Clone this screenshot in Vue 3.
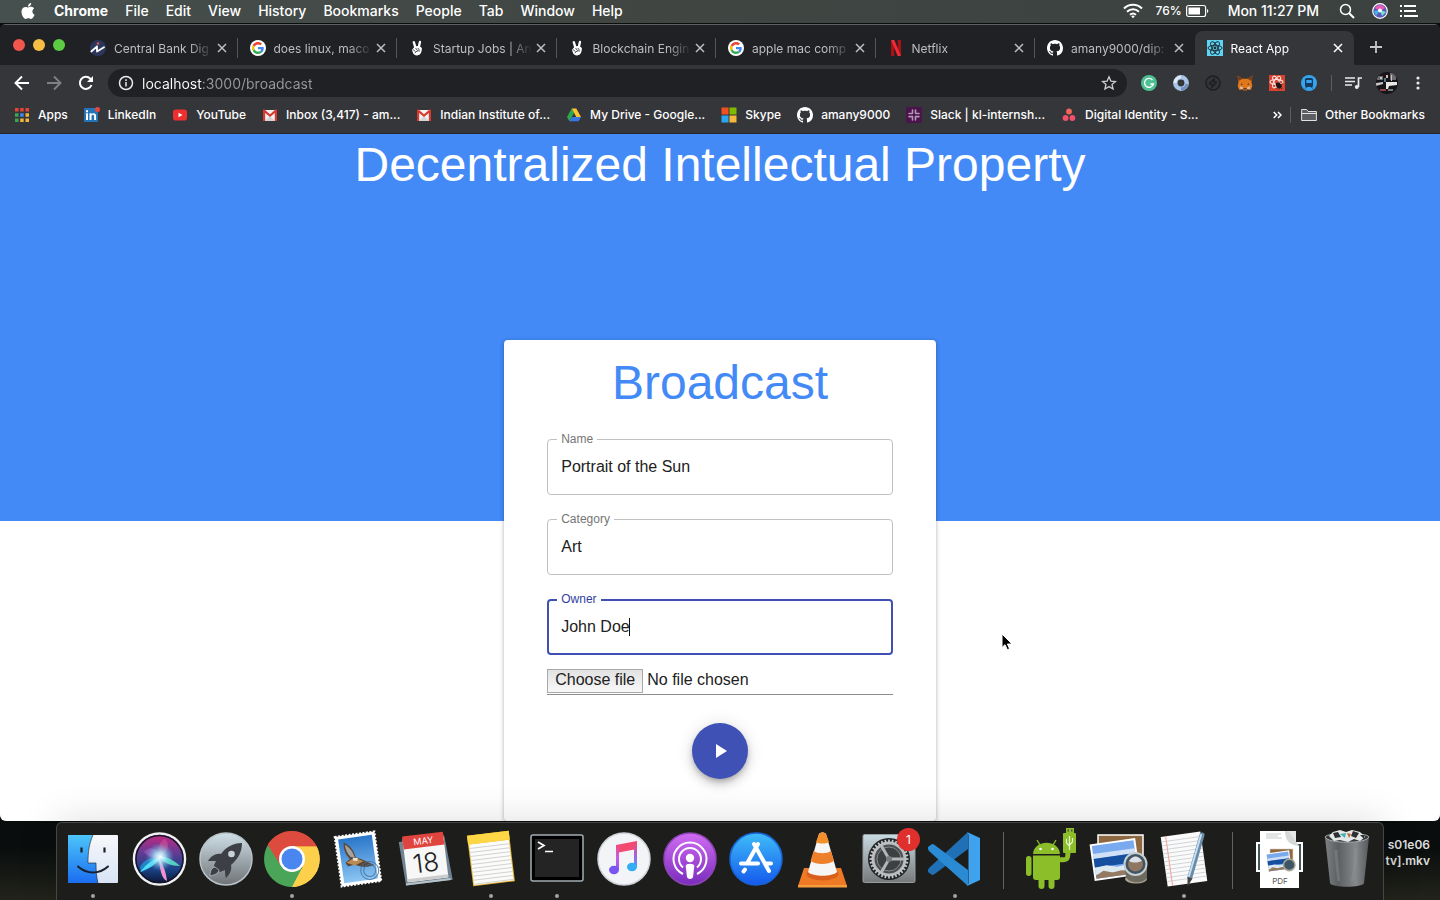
<script setup>
import { ref } from 'vue'

const menus = ['File', 'Edit', 'View', 'History', 'Bookmarks', 'People', 'Tab', 'Window', 'Help']

const google = '<circle cx="24" cy="24" r="24" fill="#fff"/><g transform="translate(6 6) scale(.75)"><path fill="#EA4335" d="M24 9.5c3.54 0 6.71 1.22 9.21 3.6l6.85-6.85C35.9 2.38 30.47 0 24 0 14.62 0 6.51 5.38 2.56 13.22l7.98 6.19C12.43 13.72 17.74 9.5 24 9.5z"/><path fill="#4285F4" d="M46.98 24.55c0-1.57-.15-3.09-.38-4.55H24v9.02h12.94c-.58 2.96-2.26 5.48-4.78 7.18l7.73 6c4.51-4.18 7.09-10.36 7.09-17.65z"/><path fill="#FBBC05" d="M10.53 28.59c-.48-1.45-.76-2.99-.76-4.59s.27-3.14.76-4.59l-7.98-6.19C.92 16.46 0 20.12 0 24c0 3.88.92 7.54 2.56 10.78l7.97-6.19z"/><path fill="#34A853" d="M24 48c6.48 0 11.93-2.13 15.89-5.81l-7.73-6c-2.15 1.45-4.92 2.3-8.16 2.3-6.26 0-11.57-4.22-13.47-9.91l-7.98 6.19C6.51 42.62 14.62 48 24 48z"/></g>'
const github = '<path fill="#fff" d="M8 0C3.58 0 0 3.58 0 8c0 3.54 2.29 6.53 5.47 7.59.4.07.55-.17.55-.38 0-.19-.01-.82-.01-1.49-2.01.37-2.53-.49-2.69-.94-.09-.23-.48-.94-.82-1.13-.28-.15-.68-.52-.01-.53.63-.01 1.08.58 1.23.82.72 1.21 1.87.87 2.33.66.07-.52.28-.87.51-1.07-1.78-.2-3.64-.89-3.64-3.95 0-.87.31-1.59.82-2.15-.08-.2-.36-1.02.08-2.12 0 0 .67-.21 2.2.82.64-.18 1.32-.27 2-.27s1.36.09 2 .27c1.53-1.04 2.2-.82 2.2-.82.44 1.1.16 1.92.08 2.12.51.56.82 1.27.82 2.15 0 3.07-1.87 3.75-3.65 3.95.29.25.54.73.54 1.48 0 1.07-.01 1.93-.01 2.2 0 .21.15.46.55.38A8.01 8.01 0 0 0 16 8c0-4.42-3.58-8-8-8z"/>'
const gmail = '<path fill="#f2f2f2" d="M1 3h14v11H1z"/><path fill="#d5d5d5" d="M3 14l5-5 5 5z"/><path fill="#d93a2f" d="M1 2.5h1.5L8 7.2l5.500-4.700H15V14h-2.200V6L8 10 3.200 6v8H1z"/>'
const hand = '<path fill="#fff" d="M4.300 1.200c.8-.3 1.400.1 1.700.8L7.300 6.300 8.800 6l1-4.300c.2-.8.9-1.100 1.500-.9.7.2.9.8.8 1.500l-1 4.500c1.300.3 1.900 1.200 1.800 2.500l-.6 2.800c-.5 2-1.900 3.300-4.300 3.300-2.200 0-3.700-1.200-4.100-2.900-.3-1.300-1.200-2.200-.5-3.300l1.700-2L3.700 2.700c-.2-.7 0-1.300.6-1.500z"/><path fill="none" stroke="#202124" stroke-width=".8" d="M4 9.500l2.500 2M6.500 8l2 2.500M8.800 8l1.500 2M6 13c1-2 3-2.500 5-2"/>'

const icons = {
  bank: { box: '0 0 16 16', art: '<circle cx="8" cy="8" r="8" fill="#2b365c"/><path d="M1.300 11.500L7 6.300v5.200l7-4.200" fill="none" stroke="#fff" stroke-width="1.800" stroke-linejoin="round" stroke-linecap="round"/><circle cx="8" cy="3.500" r="1.200" fill="#e8594a"/>' },
  google: { box: '0 0 48 48', art: google },
  github: { box: '0 0 16 16', art: github },
  hand: { box: '0 0 16 16', art: hand },
  netflix: { box: '0 0 16 16', art: '<path fill="#a80f17" d="M3 0h3.300v16H3zM9.700 0H13v16H9.700z"/><path fill="#ef2b33" d="M3 0h3.300L13 16H9.700z"/>' },
  react: { box: '0 0 16 16', art: '<path fill="#5ed4f3" d="M0 0h16v16H0z"/><g fill="none" stroke="#20303a" stroke-width="1"><ellipse cx="8" cy="8" rx="7" ry="2.700"/><ellipse cx="8" cy="8" rx="7" ry="2.700" transform="rotate(60 8 8)"/><ellipse cx="8" cy="8" rx="7" ry="2.700" transform="rotate(120 8 8)"/></g><circle cx="8" cy="8" r="1.400" fill="#20303a"/>' },
  apps: { box: '0 0 16 16', art: '<g><path fill="#ea4335" d="M1 1h3.500v3.500H1zM6.200 1h3.500v3.500H6.200zM11.500 1H15v3.500h-3.500z"/><path fill="#34a853" d="M1 6.200h3.500v3.500H1z"/><path fill="#4285f4" d="M6.200 6.200h3.500v3.500H6.200z"/><path fill="#f5b43a" d="M11.500 6.200H15v3.500h-3.500zM6.200 11.500h3.500V15H6.200zM11.500 11.500H15V15h-3.500z"/><path fill="#34a853" d="M1 11.500h3.500V15H1z"/></g>' },
  linkedin: { box: '0 0 16 16', art: '<path fill="#2474b5" d="M0 1h14v14H0z"/><path fill="#fff" d="M2 6.200h2V13H2zM2 3.300h2v2H2zM5.500 6.200h2v1c1-1.600 4.600-1.600 4.600 1.600V13h-2V9.300c0-2-2.600-2-2.600 0V13h-2z"/><circle cx="13.500" cy="2.500" r="2.500" fill="#e8453c"/>' },
  youtube: { box: '0 0 16 16', art: '<rect x="1" y="2.500" width="14" height="11" rx="2.800" fill="#ee2f2f"/><path fill="#fff" d="M6.500 5.700v4.600L10.500 8z"/>' },
  gmail: { box: '0 0 16 16', art: gmail },
  drive: { box: '0 0 16 16', art: '<path fill="#2da94f" d="M5.700 1.500L1 10l2.400 4.200L8 6z"/><path fill="#fdc52e" d="M5.700 1.500h4.600L15 10h-4.700z"/><path fill="#3777e3" d="M5.700 10H15l-2.400 4.200H3.400z"/>' },
  skype: { box: '0 0 16 16', art: '<path fill="#f25022" d="M.5.500h7v7h-7z"/><path fill="#7fba00" d="M8.500.500h7v7h-7z"/><path fill="#2aa6ef" d="M.5 8.500h7v7h-7z"/><path fill="#f8b83d" d="M8.500 8.500h7v7h-7z"/>' },
  slack: { box: '0 0 16 16', art: '<path fill="#4a154b" d="M0 0h16v16H0z"/><g stroke="#b795b7" stroke-width="1.600" stroke-linecap="round"><path d="M6.500 3v3M3 6.500h3.300M9.500 3v3.300M9.700 6.500h3.300M9.500 9.600V13M9.700 9.600H13M6.500 9.600V13M3 9.600h3.300"/></g>' },
  asana: { box: '0 0 16 16', art: '<circle cx="8" cy="4.500" r="2.900" fill="#f2665a"/><circle cx="4.600" cy="11" r="2.900" fill="#f0516b"/><circle cx="11.400" cy="11" r="2.900" fill="#f0516b"/>' },
  folder: { box: '0 0 16 16', art: '<path fill="#5c5e61" stroke="#dfe1e5" d="M.6 13.500V2.500h5l1.500 2h8.300v9zM.6 6.500h14.800"/>' },
  grammarly: { box: '0 0 16 16', art: '<circle cx="8" cy="8" r="8" fill="#4dc192"/><path fill="none" stroke="#fff" stroke-width="1.400" d="M11.500 5A4.500 4.500 0 1 0 12.400 9H9.300"/>' },
  ring: { box: '0 0 16 16', art: '<circle cx="8" cy="8" r="5.700" fill="none" stroke="#a9c4e6" stroke-width="4.500"/><path d="M2 8a6 6 0 0 1 6-6" fill="none" stroke="#dfe9f5" stroke-width="3"/><path d="M14 9a6 6 0 0 1-6 5" fill="none" stroke="#7390bd" stroke-width="3"/>' },
  compass: { box: '0 0 16 16', art: '<circle cx="8" cy="8" r="7" fill="#333538" stroke="#1d1e20" stroke-width="1.500"/><path d="M4 9l5-5v3h3M12 7l-5 5V9H4" fill="none" stroke="#1d1e20" stroke-width="1.500"/>' },
  fox: { box: '0 0 16 16', art: '<path fill="#e2761b" d="M.5.5l5 3.300h5l5-3.300-1 6.500.8 4-1.500 4-3.300-.8-1.200 1.300h-2.600l-1.200-1.300-3.300.8L.7 11l.8-4z"/><path fill="#763d16" d="M.5.5l5 3.300L1.500 6zM15.500.5l-5 3.300L14.500 6zM6 13h4l-.7 1.800H6.700z"/><path fill="#d7c1b3" d="M2.500 11.500l3 .5.700 2-2.500.2zM13.500 11.500l-3 .5-.7 2 2.500.2z"/><path fill="#233447" d="M4 8.200l2 1.200-2 .3zM12 8.200l-2 1.200 2 .3z"/>' },
  bug: { box: '0 0 16 16', art: '<path fill="#d8432f" d="M0 0h16v16H0z"/><g fill="none" stroke="#fbe3df" stroke-width="1.100"><ellipse cx="7.500" cy="7" rx="6.500" ry="2.500"/><ellipse cx="7.500" cy="7" rx="6.500" ry="2.500" transform="rotate(60 7.500 7)"/><ellipse cx="7.500" cy="7" rx="6.500" ry="2.500" transform="rotate(120 7.500 7)"/></g><ellipse cx="9.800" cy="10.500" rx="2.500" ry="3.300" transform="rotate(-45 9.800 10.500)" fill="#1f1513"/><path stroke="#1f1513" stroke-width=".8" d="M7 8l6 6M13.500 8.500l-6 5M10 6.500v8"/>' },
  train: { box: '0 0 16 16', art: '<circle cx="8" cy="8" r="8" fill="#35a4ee"/><rect x="4" y="3" width="8" height="9" rx="1.500" fill="#173a5c"/><path fill="#35a4ee" d="M5.300 5h5.400v3H5.300z"/><path stroke="#173a5c" d="M5.500 12l-1 1.500M10.500 12l1 1.500"/>' },
}

const tabs = [
  { icon: 'bank', title: 'Central Bank Dig' },
  { icon: 'google', title: 'does linux, maco' },
  { icon: 'hand', title: 'Startup Jobs | An' },
  { icon: 'hand', title: 'Blockchain Engin' },
  { icon: 'google', title: 'apple mac comp' },
  { icon: 'netflix', title: 'Netflix' },
  { icon: 'github', title: 'amany9000/dip:' },
  { icon: 'react', title: 'React App', active: true },
]

const bookmarks = [
  { icon: 'apps', title: 'Apps' },
  { icon: 'linkedin', title: 'LinkedIn' },
  { icon: 'youtube', title: 'YouTube' },
  { icon: 'gmail', title: 'Inbox (3,417) - am...' },
  { icon: 'gmail', title: 'Indian Institute of...' },
  { icon: 'drive', title: 'My Drive - Google...' },
  { icon: 'skype', title: 'Skype' },
  { icon: 'github', title: 'amany9000' },
  { icon: 'slack', title: 'Slack | kl-internsh...' },
  { icon: 'asana', title: 'Digital Identity - S...' },
]

const extensions = ['grammarly', 'ring', 'compass', 'fox', 'bug', 'train']

const gearTeeth = Array.from({ length: 32 }, (_, i) => `<path d="M33 17.500v3" transform="rotate(${i * 11.25} 33 37)"/>`).join('')
const paperLines = (x, y, w, n, step) => Array.from({ length: n }, (_, i) => `<path d="M${x} ${y + i * step}h${w}"/>`).join('')

const dockMain = [
  { name: 'Finder', running: true, art: '<defs><linearGradient id="fa" x2="0" y2="1"><stop stop-color="#4cc5f9"/><stop offset="1" stop-color="#1b6df0"/></linearGradient><linearGradient id="fb" x2="0" y2="1"><stop stop-color="#f7f8fa"/><stop offset="1" stop-color="#d7e4f5"/></linearGradient></defs><rect x="8" y="13" width="50" height="48" rx="1" fill="url(#fb)"/><path fill="url(#fa)" d="M8 13h25c-4 9-5 17-5 28h8c0 7 .5 14 2 20H8z"/><path fill="none" stroke="#18202a" stroke-width=".6" d="M33 13c-4 9-5 17-5 28h8c0 7 .5 14 2 20"/><path stroke="#18202a" stroke-width="2.200" d="M21.500 25.500v5M44.500 25.500v5"/><path fill="none" stroke="#18202a" stroke-width="2" stroke-linecap="round" d="M18 44.500c9 8 21 8 30 0"/>' },
  { name: 'Siri', art: '<defs><linearGradient id="sa" x2="0" y2="1"><stop stop-color="#c9267c"/><stop offset=".35" stop-color="#6b3a94"/><stop offset=".7" stop-color="#1a4387"/><stop offset="1" stop-color="#0d1230"/></linearGradient><radialGradient id="sb"><stop stop-color="#fff"/><stop offset=".35" stop-color="#b8f4ff" stop-opacity=".8"/><stop offset="1" stop-color="#4fc3ef" stop-opacity="0"/></radialGradient></defs><circle cx="33.500" cy="37" r="25.500" fill="url(#sa)" stroke="#f1f1f3" stroke-width="2.500"/><circle cx="33.500" cy="37" r="23.500" fill="none" stroke="#15172c" stroke-width="1.500"/><path d="M14 45c4-8 12-10 20-9-5 6-11 12-19 14z" fill="#1f9fe0" opacity=".7"/><path d="M14 50c7-8 12-13 20-14-4 7-11 10-20 14z" fill="#4fe0f5"/><path d="M34 34c8 1 15 5 20 10-9 0-17-3-20-10z" fill="#55e0c4" opacity=".9"/><path d="M33 36c4 6 7 14 8 23-5-1-8-14-8-23z" fill="#f590cf"/><path d="M18 30c6-7 13-4 16 6-8 0-13-2-16-6z" fill="#a86bc9" opacity=".5"/><path d="M34 35c-3-8-1-15 5-18 5 5 4 13-5 18z" fill="#e0559d" opacity=".5"/><circle cx="34" cy="35" r="14" fill="url(#sb)"/>' },
  { name: 'Launchpad', art: '<defs><linearGradient id="la" x2="0" y2="1"><stop stop-color="#cfe0e8"/><stop offset="1" stop-color="#6f7376"/></linearGradient></defs><circle cx="33" cy="37" r="26" fill="url(#la)" stroke="#b9c3c9" stroke-width="1.500"/><path fill="#3c4044" d="M49 21c-9 0-16 4-21 11-5-1-10 2-13 7l8 0c-1 2-2 4-2 5l6 6 5-2c0 3 0 5 1 8 4-4 6-8 5-13 7-6 11-13 11-22z"/><circle cx="38.500" cy="32" r="3.300" fill="#c8d2d8"/><path fill="#3c4044" stroke="#d0d6da" stroke-width=".6" d="M22 45c-4 1-5 5-5 9 4-1 8-2 9-6z"/>' },
  { name: 'Chrome', running: true, art: '<path fill="#dd4b3e" d="M33 37L8.800 22.500A28 28 0 0 1 57.500 24z"/><path fill="#4aa559" d="M33 37L8.800 23A28 28 0 0 0 33 65l10-17z"/><path fill="#fdd04b" d="M33 37V24.500h24.700A28 28 0 0 1 33 65l11-20z"/><path fill="#4aa559" d="M8.800 23L33 65l10-20-21-1z"/><path fill="#dd4b3e" d="M8.800 23A28 28 0 0 1 57.700 24.500H33L22 44z"/><path fill="#fdd04b" d="M44 44L33 65a28 28 0 0 0 24.700-40.500H33z"/><circle cx="33" cy="37" r="13" fill="#fff"/><circle cx="33" cy="37" r="10.500" fill="#4a86ef"/>' },
  { name: 'Mail', art: '<g transform="rotate(-8 33 37)"><rect x="13" y="12" width="40" height="50" fill="#fff" stroke="#fff" stroke-width="2" stroke-dasharray="2 1.500"/><defs><linearGradient id="ma" x2="0" y2="1"><stop stop-color="#2a76ca"/><stop offset="1" stop-color="#8cc6f2"/></linearGradient></defs><rect x="16" y="15" width="34" height="44" fill="url(#ma)"/><path fill="#594738" d="M21 19c6 3 9 9 10 16 7 3 12 7 17 10-6 2-13 1-19-3l-7 1-2-4 5-3c-4-5-5-11-4-17z"/><path fill="#a9a49b" d="M22 21c4 3 7 8 8 14l-4-1c-3-4-4-8-4-13z"/><path fill="#b98a52" d="M21 39l9-4 8 5-9 3z"/><path fill="#e9e2d5" d="M28 35l5 1-1 3-4-1z"/><g fill="none" stroke="#456e9b" opacity=".8"><circle cx="43" cy="50" r="9"/><circle cx="43" cy="50" r="6"/></g></g>' },
  { name: 'Calendar', art: '<g transform="rotate(-7 33 37)"><path fill="#718391" d="M9 17h46l3 44H11z"/><path fill="#b7c3cb" d="M11 59h45v2H11z"/><rect x="13" y="14" width="41" height="44" rx="1" fill="#f7f7f7"/><path fill="#e0443f" d="M13 12h41v13H13z"/><path fill="#ccc" d="M13 55h41v3H13z"/><text x="33.500" y="22" fill="#fff" font-family="Inter,sans-serif" font-size="9" text-anchor="middle">MAY</text><text x="33.500" y="50" fill="#222" font-family="Inter,sans-serif" font-size="26" font-weight="300" text-anchor="middle">18</text></g>' },
  { name: 'Notes', running: true, art: `<g transform="rotate(-7 33 37)"><path fill="#e6b52e" d="M12 11h42v51H12z"/><path fill="#fbfbf9" d="M13 20h40v41H13z"/><path fill="#fcd645" d="M12 11h42v9H12z"/><g stroke="#d2d2d0">${paperLines(13, 24, 40, 10, 4)}</g></g>` },
  { name: 'Terminal', running: true, art: '<rect x="7" y="13" width="52" height="46" rx="2" fill="#000" stroke="#a2adb3" stroke-width="1.500"/><path fill="#242424" d="M11 17h44v38H11z"/><path fill="none" stroke="#fff" stroke-width="1.700" d="M14 20l6 3.500-6 3.500M21 29.500h8"/>' },
  { name: 'Music', art: '<defs><linearGradient id="mu" x1="0" y1="20" x2="0" y2="52" gradientUnits="userSpaceOnUse"><stop stop-color="#f4486f"/><stop offset=".5" stop-color="#c95ce0"/><stop offset="1" stop-color="#7a55f2"/></linearGradient><linearGradient id="mv" x1="0" y1="20" x2="0" y2="50" gradientUnits="userSpaceOnUse"><stop stop-color="#f5486e"/><stop offset=".5" stop-color="#9a66e8"/><stop offset="1" stop-color="#33aef5"/></linearGradient></defs><circle cx="33" cy="37" r="26" fill="#f3f4f7" stroke="#cfd2d8" stroke-width="1.500"/><path fill="#f24a70" d="M25 23l21-4v8l-21 4z"/><path d="M25 23h3v25h-3z" fill="url(#mu)"/><path d="M43 20h3v25h-3z" fill="url(#mv)"/><ellipse cx="23" cy="48" rx="5" ry="4.200" fill="#7a55f2"/><ellipse cx="41" cy="45" rx="5" ry="4.200" fill="#33aef5"/>' },
  { name: 'Podcasts', art: '<defs><linearGradient id="po" x2="0" y2="1"><stop stop-color="#d16cf4"/><stop offset="1" stop-color="#7a2cbd"/></linearGradient></defs><circle cx="33" cy="37" r="26" fill="url(#po)" stroke="#8d45b4" stroke-width="1.500"/><g fill="none" stroke="#fff" stroke-width="2"><path d="M26 52a16.500 16.500 0 1 1 14 0"/><path d="M26 45.500a11 11 0 1 1 14 0"/></g><circle cx="33" cy="36" r="4.200" fill="#fff"/><path fill="#fff" d="M28.700 44c0-3 8.600-3 8.600 0l-1.300 11c-.5 2.500-5.500 2.500-6 0z"/>' },
  { name: 'App Store', art: '<defs><linearGradient id="as" x2="0" y2="1"><stop stop-color="#3fbdf8"/><stop offset="1" stop-color="#1559ed"/></linearGradient></defs><circle cx="33" cy="37" r="26" fill="url(#as)" stroke="#1764d8" stroke-width="1.500"/><g stroke="#fff" stroke-width="4" stroke-linecap="round"><path d="M35 22L24 41.500M31 22l15 27M18 41.500h17M43 41.500h5M22 47.500l-1.500 2"/></g>' },
  { name: 'VLC', art: '<path fill="#ee7a26" d="M14 46h37l6 18H8z"/><path fill="#f79b3c" d="M8 63h49v2.500H8z"/><ellipse cx="32.500" cy="52" rx="16" ry="6.500" fill="#d8601b"/><path fill="#f6f6f6" d="M29 12c1-2 6-2 7 0l11 38c-5 5-24 5-29 0z"/><path fill="#f4902b" d="M29 12c1-2 6-2 7 0l3 8c-3 2-10 2-13 0z"/><path fill="#ee7f2b" d="M23.500 29c5 3 13 3 17.500 0l3 10c-6 4-18 4-23.500 0z"/>' },
  { name: 'System Preferences', badge: '1', art: `<defs><linearGradient id="sp" x2="0" y2="1"><stop stop-color="#c8dae2"/><stop offset="1" stop-color="#77797b"/></linearGradient></defs><rect x="7" y="12.500" width="52" height="48" rx="1.500" fill="url(#sp)" stroke="#969b9e"/><circle cx="33" cy="37" r="21" fill="#222527"/><circle cx="33" cy="37" r="16" fill="#4c4f51" stroke="#b9bdbf" stroke-width="3"/><g stroke="#c7cacb" stroke-width="1.700">${gearTeeth}</g><circle cx="33" cy="37" r="12" fill="#3d4042" stroke="#85898b"/><path stroke="#b2b6b8" stroke-width="3" d="M33 37h15M33 37L25.500 24M33 37l-7.500 13"/><circle cx="33" cy="37" r="3" fill="#787c7e"/>` },
  { name: 'Visual Studio Code', running: true, art: '<path fill="#1f70b4" d="M46 10L7 46l-1 2v2l4 3 2-.5L46 27z"/><path fill="#2a8ad4" d="M6 27v-2l4-3 2 .500L46 48v16L7 29z"/><path fill="#3ea2ee" d="M45 10l13 6v42l-13 6c1-1 1.500-2 1.500-3V13c0-1-.5-2-1.500-3z"/>' },
]

const picture = '<path fill="#8d6840" d="M13 13h45v32H13z" stroke="#fff" stroke-width="1.500"/><g transform="rotate(-8 30 38)"><path fill="#fff" d="M7 19h46v37H7z"/><path fill="#79a9ee" d="M9 21h42v33H9z"/><path fill="#cfe0f7" d="M9 29h42v5H9z"/><path fill="#164f9f" d="M9 34h42v9H9z"/><path fill="#dce9f1" d="M9 43l12-1 10 3 20-2v7H9z"/><path fill="#957a61" d="M9 51l8-4 9 3 9-1 16 3v2H9z"/></g>'

const dockTools = [
  { name: 'Android File Transfer', art: '<g transform="translate(-2 -1)"><g fill="#8cbe2a"><path d="M16 33c1-15 26-15 27 0z"/><path d="M16 34.500h27V56c0 2-1 3-3 3H19c-2 0-3-1-3-3z"/><rect x="9" y="35" width="5.500" height="20" rx="2.700"/><rect x="21.500" y="54" width="6" height="14" rx="3"/><rect x="31.500" y="54" width="6" height="14" rx="3"/></g><path fill="none" stroke="#8cbe2a" stroke-width="5" d="M43 38.500c8 1 8-1 8-9"/><path stroke="#8cbe2a" stroke-width="1.300" d="M23 24l-3-5M36 24l3-5"/><rect x="46" y="12" width="13" height="20" rx="1" fill="#8cbe2a"/><path fill="#8cbe2a" d="M49 7h8v5h-8z"/><path stroke="#e8f4d0" stroke-width="1.200" fill="none" d="M52.500 15v14M49.500 18v4l3 3M55.500 17v4l-3 3"/><circle cx="23.500" cy="28" r="1.300" fill="#fff"/><circle cx="35.500" cy="28" r="1.300" fill="#fff"/><path fill="#4c4d47" d="M50.500 8.500h1.500v2h-1.500zM54 8.500h1.500v2H54z"/></g>' },
  { name: 'Preview', art: picture + '<ellipse cx="51" cy="57" rx="11" ry="4.500" fill="#aaa38f"/><path fill="#6d6a60" d="M39 40h23v15c-2 7-18 7-21 0z"/><circle cx="50.500" cy="42" r="11" fill="#3e5565" stroke="#c8cdd0" stroke-width="2"/><circle cx="50.500" cy="42" r="7.500" fill="#907762"/><path fill="#d9e2e8" d="M44 39c4-6 9-6 13 0-3 1-8 3-13 0z"/>' },
  { name: 'TextEdit', running: true, art: `<g transform="rotate(-8 33 37)"><path fill="#fafafa" d="M13 12h40v50H13z"/><g stroke="#c9ced2" stroke-width=".8">${paperLines(13, 17, 40, 11, 4)}</g><path stroke="#f0a29c" d="M18 12v50"/></g><path stroke="#688baa" stroke-width="5" stroke-linecap="round" d="M51 13L39 55"/><path stroke="#c7dff0" stroke-width="2" stroke-linecap="round" d="M50 13L38 54"/><path fill="#444" d="M36.500 55l5 1.500-5 8z"/>` },
]

const dockFiles = [
  { name: 'Documents', art: '<path fill="#e6e8e8" d="M15 9h34v40H15z"/><path fill="#fff" d="M9 20h47v30H9z"/><path fill="#43565a" d="M11 22h43v26H11z"/><path fill="#fff" d="M13 9h25l14 15v42H13z"/><path fill="#d5d8d9" d="M38 9c0 9 4 14 14 15L42 10z"/><g stroke="#b9bcbc" stroke-width=".8"><path d="M19 12h15M19 14h12M19 16h16"/></g><g transform="translate(16 20) scale(.52)">' + picture + '<circle cx="50.500" cy="44" r="11" fill="#3e5565" stroke="#a9a797" stroke-width="3"/></g><text x="33" y="62" fill="#555" font-family="Inter,sans-serif" font-size="8" text-anchor="middle">PDF</text>' },
  { name: 'Trash', art: '<defs><linearGradient id="tr"><stop stop-color="#7d8183"/><stop offset=".3" stop-color="#5b5f62"/><stop offset=".7" stop-color="#85898b"/><stop offset="1" stop-color="#56595b"/></linearGradient></defs><path fill="url(#tr)" d="M11 15h44l-5 46c-1 5-33 5-34 0z"/><path fill="#34383a" stroke="#a8acae" d="M11 15c2-5 42-5 44 0-3 7-41 7-44 0z"/><path fill="#e6e8e8" d="M15 14l4-4 7-2 6 2 6-2 8 2 5 5-5 4-6-2-6 3-8-2-6 1z"/><path fill="#2d3133" d="M19 11l5-1 3 5-6 1zM39 9l6 2-3 5-5-2zM46 13l4 0 0 4z"/><path fill="#3bb3b9" d="M26 12l6-1-1 5z"/><path fill="#c1603a" d="M33 11l4 1-2 4z"/><path fill="none" stroke="#909496" opacity=".4" stroke-width="3" d="M22 28c1 10 1 20 3 31M42 26c-1 12-1 22-4 33"/>' },
]

const form = ref({ name: 'Portrait of the Sun', category: 'Art', owner: 'John Doe' })
const address = ref('localhost:3000/broadcast')
const fields = [
  { key: 'name', label: 'Name' },
  { key: 'category', label: 'Category' },
  { key: 'owner', label: 'Owner', focused: true },
]
</script>

<template>
  <div class="desktop">
    <header class="menubar">
      <nav class="menus" aria-label="Menu bar">
        <button class="apple" aria-label="Apple menu">
          <svg viewBox="0 0 24 24" width="16" height="16" fill="#fff"><path d="M12.152 6.896c-.948 0-2.415-1.078-3.96-1.040-2.040.027-3.910 1.183-4.961 3.014-2.117 3.675-.546 9.103 1.519 12.090 1.013 1.454 2.208 3.090 3.792 3.039 1.520-.065 2.090-.987 3.935-.987 1.831 0 2.350.987 3.960.948 1.637-.026 2.676-1.480 3.676-2.948 1.156-1.688 1.636-3.325 1.662-3.415-.039-.013-3.182-1.221-3.220-4.857-.026-3.040 2.480-4.494 2.597-4.559-1.429-2.090-3.623-2.324-4.390-2.376-2-.156-3.675 1.090-4.610 1.090zM15.530 3.830c.843-1.012 1.400-2.427 1.245-3.830-1.207.052-2.662.805-3.532 1.818-.780.896-1.454 2.338-1.273 3.714 1.338.104 2.715-.688 3.559-1.701"/></svg>
        </button>
        <button class="app-name">Chrome</button>
        <button v-for="m in menus" :key="m">{{ m }}</button>
      </nav>
      <div class="status">
        <svg class="wifi" viewBox="0 0 20 16" width="20" height="16" fill="none" stroke="#fff" stroke-width="2"><path d="M1 5.500c5-5 13-5 18 0M4 8.700c3.500-3.300 8.500-3.300 12 0M7 11.700c2-1.700 4-1.700 6 0"/><path d="M8.200 13.200L10 15.200l1.800-2c-1-.9-2.600-.9-3.600 0z" fill="#fff" stroke="none"/></svg>
        <span class="battery-text">76%</span>
        <svg viewBox="0 0 24 14" width="24" height="14"><rect x=".6" y="1.500" width="19" height="11" rx="2" fill="none" stroke="#fff" stroke-width="1.200"/><path fill="#fff" d="M2.500 3.500H14v7H2.500zM21 5c1.800.6 1.800 3.400 0 4z"/></svg>
        <span class="clock">Mon 11:27 PM</span>
        <svg viewBox="0 0 16 16" width="16" height="16" fill="none" stroke="#fff" stroke-width="1.500"><circle cx="6.500" cy="6.500" r="5"/><path d="M10.200 10.200L15 15" stroke-width="2"/></svg>
        <svg class="siri" viewBox="0 0 16 16" width="16" height="16"><circle cx="8" cy="8" r="7.300" fill="#5f58b8" stroke="#fff" stroke-width="1.200"/><path fill="#e85bb1" d="M3 5c2-4 8-4 10 0l-5 3z"/><path fill="#39bde8" d="M2 8l6-1-4 6z"/><path fill="#6fe6d6" d="M14 9L8 7l2 6z"/><circle cx="8" cy="7.500" r="2" fill="#fff"/></svg>
        <svg viewBox="0 0 18 14" width="18" height="14" stroke="#fff" stroke-width="2"><path d="M0 2h2M0 7h2M0 12h2M4 2h12M4 7h12M4 12h14" /></svg>
      </div>
    </header>

    <div class="window">
      <div class="tabstrip">
        <div class="lights"><button class="red" aria-label="Close window"></button><button class="yellow" aria-label="Minimise"></button><button class="green" aria-label="Zoom"></button></div>
        <div class="tabs">
          <div v-for="t in tabs" :key="t.title" class="tab" :class="{ active: t.active }">
            <svg width="16" height="16" :viewBox="icons[t.icon].box" v-html="icons[t.icon].art"></svg>
            <button class="tab-title">{{ t.title }}</button>
            <button class="close" aria-label="Close tab"><svg viewBox="0 0 10 10" width="10" height="10" stroke="currentColor" stroke-width="1.500"><path d="M1 1l8 8M9 1L1 9"/></svg></button>
          </div>
        </div>
        <button class="new-tab" aria-label="New tab"><svg viewBox="0 0 12 12" width="12" height="12" stroke="#c4c7cb" stroke-width="1.800"><path d="M6 0v12M0 6h12"/></svg></button>
      </div>

      <div class="toolbar">
        <button aria-label="Back"><svg viewBox="0 0 16 16" width="16" height="16" fill="none" stroke="#fff" stroke-width="1.900"><path d="M15 8H2M8 1.500L1.500 8 8 14.500"/></svg></button>
        <button aria-label="Forward"><svg viewBox="0 0 16 16" width="16" height="16" fill="none" stroke="#7e8084" stroke-width="1.900"><path d="M1 8h13M8 1.500L14.500 8 8 14.500"/></svg></button>
        <button aria-label="Reload"><svg viewBox="0 0 16 16" width="16" height="16"><path d="M13.500 10A6 6 0 1 1 12.300 3.800l1.200 1.300" fill="none" stroke="#fff" stroke-width="2"/><path fill="#fff" d="M15 1v6H9z"/></svg></button>
        <div class="omnibox">
          <svg viewBox="0 0 16 16" width="16" height="16" fill="none" stroke="#e8eaed" stroke-width="1.500"><circle cx="8" cy="8" r="6.500"/><path d="M8 7v4.500M8 4.300v1.600"/></svg>
          <input v-model="address" aria-label="Address" />
          <button aria-label="Bookmark this page"><svg viewBox="0 0 16 16" width="16" height="16" fill="none" stroke="#c9cbcf" stroke-width="1.300"><path d="M8 1.800l1.900 4.300 4.600.4-3.500 3 1.100 4.500L8 11.600 3.900 14l1.100-4.500-3.500-3 4.600-.4z"/></svg></button>
        </div>
        <div class="extensions">
          <button v-for="e in extensions" :key="e" :aria-label="e"><svg width="16" height="16" :viewBox="icons[e].box" v-html="icons[e].art"></svg></button>
        </div>
        <i class="rule"></i>
        <div class="controls">
          <button aria-label="Media"><svg viewBox="0 0 17 16" width="17" height="16" fill="none" stroke="#e8eaed" stroke-width="1.700"><path d="M0 3h10M0 6.500h10M0 10h7M13.500 12V3H17"/><circle cx="11.800" cy="12" r="2" fill="#e8eaed" stroke="none"/></svg></button>
          <button aria-label="Profile"><svg viewBox="0 0 22 22" width="22" height="22"><clipPath id="avatar"><circle cx="11" cy="11" r="11"/></clipPath><g clip-path="url(#avatar)"><path fill="#17151a" d="M0 0h22v22H0z"/><path fill="#6d6a6e" d="M1 4h6v4H1zM14 1h6v7h-6z"/><path fill="#c9c5c6" d="M0 11l7-1v2l-7 2zM15 3h1v6h-1zM4 5h2v2H4z"/><path fill="#ece8e6" d="M10 10l11 0v3l-8 1-1 3h-2z"/><path fill="#d9b8b0" d="M10 3h2v3h-2z"/><path fill="#8b4448" d="M4 17h6v2H4z"/><path fill="#777" d="M12 17h5v2h-5z"/><path fill="#4b7f8a" d="M8 6h2v4H8z"/></g></svg></button>
          <button aria-label="Menu"><svg viewBox="0 0 4 14" width="4" height="14" fill="#e8eaed"><circle cx="2" cy="2" r="1.600"/><circle cx="2" cy="7" r="1.600"/><circle cx="2" cy="12" r="1.600"/></svg></button>
        </div>
      </div>

      <nav class="bookmarks" aria-label="Bookmarks">
        <div class="bookmark-list">
          <a v-for="b in bookmarks" :key="b.title" href="#"><svg width="16" height="16" :viewBox="icons[b.icon].box" v-html="icons[b.icon].art"></svg>{{ b.title }}</a>
        </div>
        <button class="more" aria-label="More bookmarks"><svg viewBox="0 0 9 8" width="9" height="8" fill="none" stroke="#fff" stroke-width="1.500"><path d="M.7 1l3 3-3 3M5 1l3 3-3 3"/></svg></button>
        <i class="rule"></i>
        <a href="#"><svg width="16" height="16" :viewBox="icons.folder.box" v-html="icons.folder.art"></svg>Other Bookmarks</a>
      </nav>

      <main class="page">
        <section class="hero"><h1>Decentralized Intellectual Property</h1></section>
        <form class="card" @submit.prevent>
          <h2>Broadcast</h2>
          <div class="fields">
            <div v-for="f in fields" :key="f.key" class="field" :class="{ focused: f.focused }">
              <label :for="f.key">{{ f.label }}</label>
              <input :id="f.key" v-model="form[f.key]" type="text" />
              <i v-if="f.focused" class="caret"></i>
            </div>
          </div>
          <div class="file">
            <input id="work" type="file" />
            <label for="work">Choose file</label>
            <span>No file chosen</span>
          </div>
          <button class="fab" aria-label="Broadcast"><svg viewBox="0 0 24 24" width="24" height="24" fill="#fff"><path d="M8 5v14l11-7z"/></svg></button>
        </form>
      </main>
    </div>

    <footer class="dock-row">
      <nav class="dock" aria-label="Dock">
        <template v-for="(group, g) in [dockMain, dockTools, dockFiles]" :key="g">
          <i v-if="g" class="divider"></i>
          <button v-for="d in group" :key="d.name" :aria-label="d.name">
            <svg viewBox="0 0 66 78" width="66" height="78" v-html="d.art"></svg>
            <span v-if="d.badge" class="badge">{{ d.badge }}</span>
            <i v-if="d.running" class="dot"></i>
          </button>
        </template>
      </nav>
      <div class="file-name"><span>s01e06</span><span>tv].mkv</span></div>
    </footer>

    <svg class="pointer" viewBox="0 0 12 18" width="12" height="18"><path fill="#000" stroke="#fff" d="M1 1v13.500l3-2.800 2.300 5 2.300-1-2.200-4.700H11z"/></svg>
  </div>
</template>

<style>
body { background: #0c0f0e; }
</style>

<style scoped>
* { box-sizing: border-box; }
.desktop {
  position: relative;
  display: flex;
  flex-direction: column;
  min-height: 100vh;
  background: linear-gradient(#090d0d 94%, #22231a);
  color: #fff;
  font-family: Inter, "Liberation Sans", sans-serif;
  overflow: hidden;
}
button { padding: 0; border: 0; background: none; color: inherit; font: inherit; }
button svg, a svg { display: block; flex: none; }
a { color: inherit; text-decoration: none; }

.menubar {
  display: flex;
  justify-content: space-between;
  align-items: center;
  height: 23px;
  padding: 0 22px 2px 20px;
  background: linear-gradient(90deg, #46504e, #414643 40%, #3b413f);
  font-size: 14px;
  font-weight: 500;
}
.menus { display: flex; align-items: center; gap: 17px; }
.apple { margin-right: 1px; }
.app-name { font-weight: 700; }
.status { display: flex; align-items: center; }
.battery-text { margin: 0 4px 0 12px; font-size: 12px; }
.clock { margin: 0 20px 0 18px; }
.siri { margin: 0 12px 0 17px; }

.window {
  flex: 1;
  display: flex;
  flex-direction: column;
  margin-top: 1px;
  border-radius: 6px;
  background: #35363a;
  overflow: hidden;
}
.tabstrip {
  display: flex;
  align-items: flex-end;
  height: 41px;
  border-top: 1px solid #5d6062;
  background: #202124;
}
.lights { display: flex; align-items: center; gap: 8px; width: 78px; height: 40px; padding-left: 13px; }
.lights button { width: 12px; height: 12px; border-radius: 50%; }
.red { background: #f2564d; }
.yellow { background: #f8bd44; }
.green { background: #5bcc43; }
.tabs { flex: 0 1 1276px; display: flex; min-width: 0; }
.tab {
  position: relative;
  flex: 1 1 0;
  display: flex;
  align-items: center;
  min-width: 0;
  height: 34px;
  padding: 0 11px 0 12px;
  color: #bcbec2;
  font-size: 12px;
}
.tab:not(.active)::after { content: ""; position: absolute; right: 0; width: 1px; height: 20px; background: #53565a; }
.tab:nth-child(7)::after { display: none; }
.tab svg { flex: none; }
.tab-title {
  flex: 1;
  min-width: 0;
  margin: 0 4px 0 8px;
  overflow: hidden;
  text-align: left;
  white-space: nowrap;
  mask-image: linear-gradient(90deg, #000 76%, transparent 100%);
}
.active { border-radius: 8px 8px 0 0; background: #35363a; color: #fff; }
.new-tab { display: flex; padding: 0 16px 12px; }

.toolbar { display: flex; align-items: center; gap: 16px; height: 36px; padding: 0 20px 0 14px; }
.omnibox {
  flex: 1;
  display: flex;
  align-items: center;
  gap: 8px;
  height: 28px;
  margin: 0 -2px 0 -2px;
  padding: 0 10px;
  border-radius: 14px;
  background: #202124;
}
.omnibox input {
  flex: 1;
  min-width: 0;
  padding: 0;
  border: 0;
  outline: 0;
  background: linear-gradient(90deg, #fff 60px, #97999d 0);
  background-clip: text;
  color: transparent;
  font: 14px Inter, sans-serif;
}
.extensions { display: flex; gap: 16px; }
.rule { width: 1px; height: 16px; background: #5b5d61; }
.toolbar .rule { margin-left: -2px; }
.controls { display: flex; align-items: center; gap: 14px; margin-left: -3px; }
.controls button:last-child { margin-left: 4px; }

.bookmarks { display: flex; align-items: center; height: 33px; padding: 0 15px 5px 14px; border-bottom: 1px solid #252629; font-size: 12px; font-weight: 500; }
.bookmarks a { display: flex; align-items: center; gap: 8px; white-space: nowrap; }
.bookmark-list { display: flex; gap: 16px; flex: 1; min-width: 0; overflow: hidden; }
.more { margin-right: 8px; }
.bookmarks > a { margin-left: 10px; }

.page { flex: 1; background: #fff; color: #212121; font-family: "Liberation Sans", Arial, sans-serif; }
.hero { height: 387px; padding-top: 3px; background: #438af7; color: #fff; text-align: center; }
h1, h2 { margin: 0; font-size: 48px; line-height: 56px; font-weight: 400; }
.card {
  display: flex;
  flex-direction: column;
  align-items: center;
  width: 30%;
  min-height: 481px;
  margin: -181px auto 0;
  padding: 15px 0 42px;
  border-radius: 4px;
  background: #fff;
  box-shadow: 0 1px 4px rgba(0, 0, 0, .32);
}
h2 { color: #438af7; }
.fields { display: grid; gap: 24px; width: 80%; margin-top: 28px; }
.field { position: relative; }
.field label { position: absolute; top: -7px; left: 10px; padding: 0 4px; background: #fff; color: #757575; font-size: 12px; line-height: 14px; }
.field input {
  display: block;
  width: 100%;
  height: 56px;
  padding: 0 13px;
  border: 1px solid #c0c0c0;
  border-radius: 4px;
  outline: 0;
  background: #fff;
  color: #212121;
  font: 16px "Liberation Sans", Arial, sans-serif;
}
.focused input { padding: 0 12px; border: 2px solid #3f51b5; }
.focused label { color: #303f9f; }
.caret { position: absolute; top: 19px; left: 82px; width: 1px; height: 18px; background: #111; }
.file { position: relative; display: flex; align-items: center; gap: 4px; width: 80%; height: 26px; margin-top: 14px; padding-bottom: 1px; border-bottom: 1px solid #8c8c8c; font-size: 16px; line-height: 20px; }
.file input { position: absolute; inset: 0; width: 100%; opacity: 0; }
.file label, .file span { height: 24px; }
.file span { padding-top: 1px; }
.file label { padding: 0 7px; border: 1px solid #a9a9a9; background: linear-gradient(#e2e2e2, #f8f8f8); }
.fab { display: grid; place-items: center; width: 56px; height: 56px; margin-top: 28px; border-radius: 50%; background: #3f51b5; box-shadow: 0 3px 5px -1px rgba(0, 0, 0, .2), 0 6px 10px rgba(0, 0, 0, .14), 0 1px 18px rgba(0, 0, 0, .12); }

.dock-row { display: grid; grid-template-columns: 56px 1fr 56px; height: 79px; padding-top: 1px; }
.dock {
  position: relative;
  grid-column: 2;
  display: flex;
  padding: 0 3px;
  border: 1px solid #454642;
  border-bottom: 0;
  border-radius: 6px 6px 0 0;
  background: #1d1e1b;
  box-shadow: 0 0 40px rgba(0, 0, 0, .14);
}
.dock button { position: relative; flex: 1 1 0; display: flex; justify-content: center; min-width: 0; }
.dock button svg { margin-top: -1px; }
.divider { width: 1px; margin: 9px 14px 11px 15px; background: #62635f; }
.dot { position: absolute; bottom: 2px; left: calc(50% - 2px); width: 4px; height: 4px; border-radius: 50%; background: #a3a3a1; }
.badge { position: absolute; top: 5px; right: 2px; width: 23px; height: 23px; border-radius: 50%; background: #e0302e; font-size: 12px; line-height: 23px; text-align: center; }
.file-name { display: flex; flex-direction: column; align-items: flex-end; padding: 15px 10px 0 0; color: #ddd; font-size: 12px; line-height: 16px; font-weight: 600; }
.pointer { position: absolute; left: 1001px; top: 633px; }
</style>
